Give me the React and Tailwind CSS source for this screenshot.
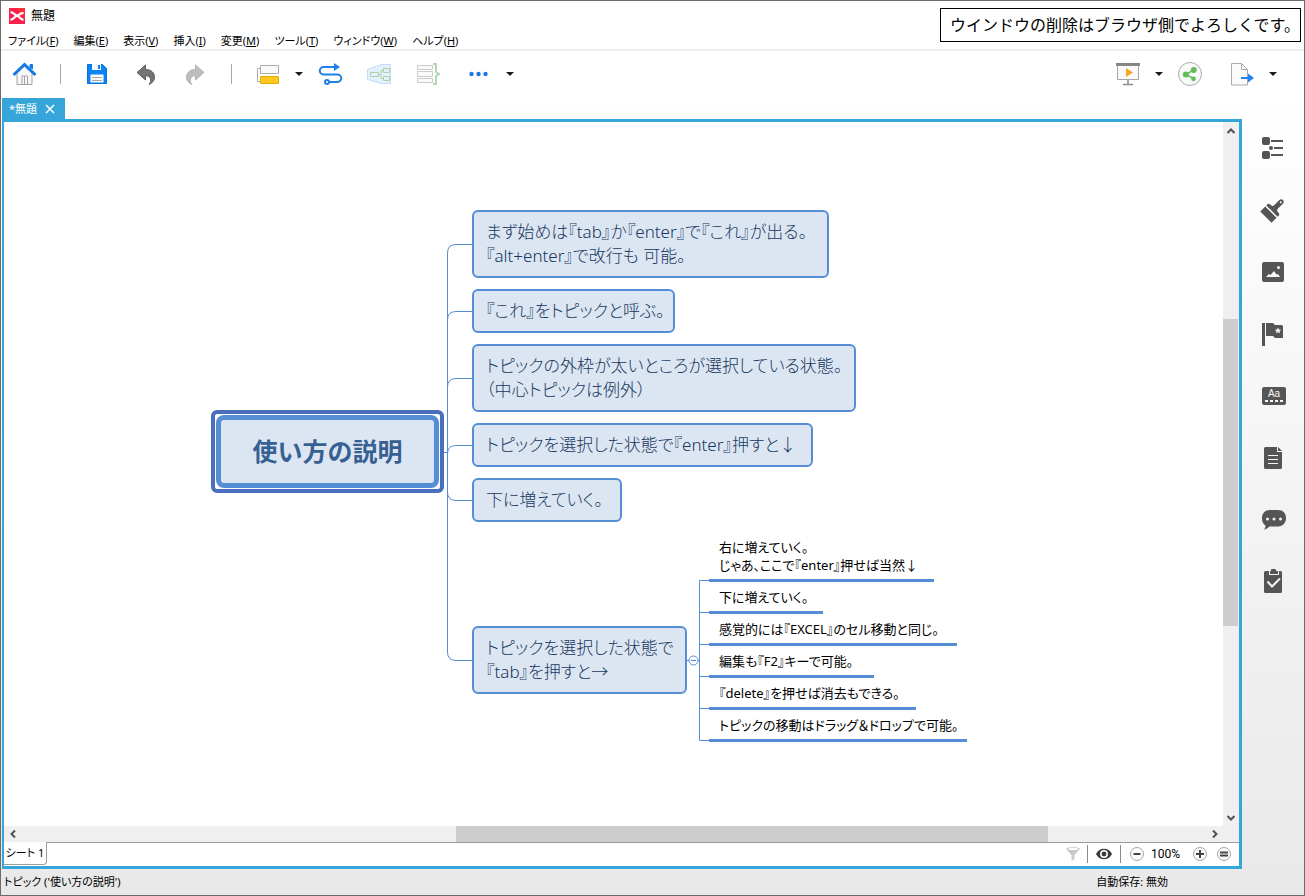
import React from "react";

const TEXT = "font-['Noto_Sans','Noto_Sans_CJK_JP',sans-serif]";

const menus = [
  ["ファイル", "F"],
  ["編集", "E"],
  ["表示", "V"],
  ["挿入", "I"],
  ["変更", "M"],
  ["ツール", "T"],
  ["ウィンドウ", "W"],
  ["ヘルプ", "H"],
];

const topics = [
  { pos: "left-[468px] top-[88px] w-[357px]", lines: ["まず始めは『tab』か『enter』で『これ』が出る。", "『alt+enter』で改行も 可能。"] },
  { pos: "left-[468px] top-[167px] w-[203px]", lines: ["『これ』をトピックと呼ぶ。"] },
  { pos: "left-[468px] top-[222px] w-[384px]", lines: ["トピックの外枠が太いところが選択している状態。", "（中心トピックは例外）"] },
  { pos: "left-[468px] top-[301px] w-[341px]", lines: ["トピックを選択した状態で『enter』押すと↓"] },
  { pos: "left-[468px] top-[356px] w-[150px]", lines: ["下に増えていく。"] },
  { pos: "left-[468px] top-[504px] w-[215px]", lines: ["トピックを選択した状態で", "『tab』を押すと→"] },
];

const subtopics = [
  { w: "w-[225px]", lines: ["右に増えていく。", "じゃあ、ここで『enter』押せば当然↓"] },
  { w: "w-[114px]", lines: ["下に増えていく。"] },
  { w: "w-[248px]", lines: ["感覚的には『EXCEL』のセル移動と同じ。"] },
  { w: "w-[165px]", lines: ["編集も『F2』キーで可能。"] },
  { w: "w-[207px]", lines: ["『delete』を押せば消去もできる。"] },
  { w: "w-[258px]", lines: ["トピックの移動はドラッグ＆ドロップで可能。"] },
];

function Svg({ w = 26, h = 26, children }) {
  return (
    <svg width={w} height={h} viewBox={`0 0 ${w} ${h}`} fill="none" aria-hidden="true" className="block shrink-0">
      {children}
    </svg>
  );
}

function IconButton({ label, children }) {
  return (
    <button type="button" aria-label={label} className="block shrink-0">
      {children}
    </button>
  );
}

function Caret({ label }) {
  return (
    <IconButton label={label}>
      <Svg w={10} h={10}>
        <path d="M1 3h8L5 7z" fill="#1c1c1c" />
      </Svg>
    </IconButton>
  );
}

function Separator() {
  return <div className="h-5 w-px shrink-0 bg-[#a6a6a6]" />;
}

const HomeIcon = () => (
  <Svg>
    <path d="M6 12v11.5h15V12l-7.500-7z" fill="#f7f7f7" stroke="#a3a3a3" />
    <path d="M11 23.500v-8.500h5.500v8.500M13.500 15v8" stroke="#a3a3a3" />
    <path d="M19 3.500h2.500V8L19 6z" fill="#1479e8" stroke="#1479e8" />
    <path d="M2.500 14L13.500 3.500L24.500 14" stroke="#1479e8" strokeWidth="3" />
  </Svg>
);

const SaveIcon = () => (
  <Svg>
    <path d="M4 3.500h14.500l4 4V22.500H3.500V3.500z" fill="#0a84f5" stroke="#0873dc" />
    <path d="M8 3h9v6H8z" fill="#f5f9ff" />
    <path d="M14 4h2v4h-2z" fill="#0a84f5" />
    <path d="M6.500 13.500h13v8h-13z" fill="#fafafa" />
    <path d="M8 16.500h10M8 19.500h10" stroke="#a8a8a8" />
  </Svg>
);

const ArrowIcon = ({ dark }) => (
  <Svg>
    <g transform={dark ? undefined : "translate(26 0) scale(-1 1)"}>
      <path d="M4 11.500L12.500 4v4.500c6 0 9 3.500 9 8 0 3.500-2.500 5.500-5.500 7 1.800-2 2.200-4 1.300-6-.8-2-2.300-2.700-4.800-2.800V19z" fill={dark ? "#747474" : "#bdbdbd"} stroke={dark ? "#5e5e5e" : "#b3b3b3"} />
    </g>
  </Svg>
);

const TopicIcon = () => (
  <Svg>
    <path d="M5 7.500H2.500v13H5" stroke="#aaa" />
    <path d="M5.500 4.500h18v8h-18z" fill="#fafafa" stroke="#aaa" />
    <path d="M5.500 15.500h18v7h-18z" fill="#ffc91a" stroke="#e6a80d" />
  </Svg>
);

const RelationIcon = () => (
  <Svg>
    <path d="M18 6H6.500a3.500 3.500 0 000 7.500h14a3.500 3.500 0 010 7.500H12" stroke="#1f80ea" strokeWidth="2" />
    <path d="M17 2l6 4-6 4z" fill="#1f80ea" />
    <circle cx="10" cy="21" r="2" fill="#fff" stroke="#1f80ea" strokeWidth="2" />
  </Svg>
);

const BoundaryIcon = () => (
  <Svg>
    <path d="M1.500 8.500l14-5h9v19h-9l-14-4z" fill="#e4f1fc" stroke="#8fc0ef" strokeDasharray="1 1" />
    <path d="M4.500 11.500h8v4h-8zM17.500 7.500h6v4h-6zM17.500 15.500h6v4h-6zM12.500 13.500h2M17 9.500h-2v8h2" stroke="#a9d3a5" />
  </Svg>
);

const SummaryIcon = () => (
  <Svg>
    <path d="M1.500 4.500h15v4h-15zM1.500 10.500h15v5h-15zM1.500 17.500h15v4h-15z" fill="#fafafa" stroke="#cbcbcb" />
    <path d="M17 3h3v8l3 2-3 2v8h-3" stroke="#b0d9ac" strokeWidth="2" />
  </Svg>
);

const DotsIcon = () => (
  <Svg>
    <circle cx="5.500" cy="13" r="2.200" fill="#1b76e8" />
    <circle cx="12.500" cy="13" r="2.200" fill="#1b76e8" />
    <circle cx="19.500" cy="13" r="2.200" fill="#1b76e8" />
  </Svg>
);

const PresentIcon = () => (
  <Svg>
    <path d="M2.500 4.500h21v14h-21z" fill="#fafafa" stroke="#a6a6a6" />
    <path d="M1 2h24v3H1z" fill="#858585" />
    <path d="M11 7l7 4.500-7 4.500z" fill="#f9a622" />
    <path d="M13 19v4M8 23.500h10" stroke="#8a8a8a" strokeWidth="1.500" />
  </Svg>
);

const ShareIcon = () => (
  <Svg>
    <circle cx="13" cy="13" r="11.500" fill="#fafafa" stroke="#a9a9a9" />
    <path d="M16.500 9L9 13.500l7.500 4" stroke="#62bd57" strokeWidth="1.500" />
    <circle cx="16.800" cy="9" r="3" fill="#62bd57" />
    <circle cx="8.800" cy="13.500" r="3" fill="#62bd57" />
    <circle cx="16.500" cy="17.800" r="2.400" fill="#62bd57" />
  </Svg>
);

const ExportIcon = () => (
  <Svg>
    <path d="M2.500 2.500h10l6 6v15.500h-16z" fill="#fafafa" stroke="#a9a9a9" />
    <path d="M12.500 2.500v6h6" stroke="#a9a9a9" />
    <path d="M12 17h7" stroke="#1f84ee" strokeWidth="2" />
    <path d="M19 12.500l6 4.500-6 4.500z" fill="#1f84ee" />
  </Svg>
);

const panelIcons = [
  [
    "アウトライン",
    <>
      <rect x="2" y="2" width="8" height="8" rx="2" />
      <rect x="2" y="16" width="8" height="8" rx="2" />
      <circle cx="11" cy="13" r="2" />
      <path d="M11 5h12v2H11zM14 12h9v2h-9zM11 19h12v2H11z" />
    </>,
  ],
  [
    "書式",
    <>
      <g transform="rotate(45 13 13)">
        <path d="M5 16h16v7H5zM5 14.500V13c0-1.500 1-2 2.500-2 2 0 3-.5 3-2.500V1.500a2.500 2.500 0 015 0v7c0 2 1 2.500 3 2.500 1.500 0 2.500.5 2.500 2v1.500z" />
        <circle cx="13" cy="2" r="1" fill="#f8f8f8" />
      </g>
    </>,
  ],
  [
    "画像",
    <>
      <rect x="2" y="3" width="22" height="20" rx="2" />
      <path d="M6 18l3-3 1.500 1 3.500-4 2.500 3.500 1.500-.5L20 18z" fill="#f8f8f8" />
      <circle cx="18.500" cy="8.500" r="1.500" fill="#f8f8f8" />
    </>,
  ],
  [
    "マーカー",
    <>
      <path d="M2 2h3v23H2zM6 2h7l2 2h6.500a1.500 1.500 0 011.500 1.500V17h-8l-2-2H6z" />
      <path d="M18 6.500l1 2 2.200.2-1.700 1.500.5 2.100-2-1.100-2 1.100.5-2.100-1.700-1.500 2.200-.2z" fill="#f8f8f8" />
    </>,
  ],
  [
    "ラベル",
    <>
      <rect x="2" y="4" width="24" height="18" rx="2" />
      <path d="M5 17h3v2H5zM10 17h3v2h-3zM15 17h3v2h-3zM20 17h3v2h-3z" fill="#f8f8f8" />
      <text x="14" y="14" textAnchor="middle" className="font-['Liberation_Sans',sans-serif] text-[10px]" fill="#f8f8f8">Aa</text>
    </>,
  ],
  [
    "ノート",
    <>
      <path d="M5.500 2H17v5h5v15.500a1.500 1.500 0 01-1.500 1.500h-15A1.500 1.500 0 014 22.500v-19A1.500 1.500 0 015.500 2zM18 2l4 4h-4z" />
      <path d="M8 10.500h10M8 14.500h10M8 18.500h10" stroke="#f8f8f8" />
    </>,
  ],
  [
    "コメント",
    <>
      <path d="M10 3h8c5 0 8 3.500 8 8s-3 8.500-8 8.500H9.500C8 21 6 22.500 4 22.500c1-1 1.500-2.500 1.500-4C3 17 2 14.500 2 11c0-4.500 3-8 8-8z" />
      <circle cx="7.500" cy="12" r="1.500" fill="#f4f4f4" />
      <circle cx="14" cy="12" r="1.500" fill="#f4f4f4" />
      <circle cx="20.500" cy="12" r="1.500" fill="#f4f4f4" />
    </>,
  ],
  [
    "タスク",
    <>
      <path d="M5.500 2H9v4h10V2h1.500A1.500 1.500 0 0122 3.500v19a1.500 1.500 0 01-1.500 1.500h-15A1.500 1.500 0 014 22.500v-19A1.500 1.500 0 015.500 2zM10 2h1V1q0-1 1-1h3q1 0 1 1v1h2v3h-8z" />
      <path d="M7.500 12.500l4.500 5 8-8" stroke="#f4f4f4" strokeWidth="2" />
    </>,
  ],
];

function Chevron({ d, label, box }) {
  return (
    <button type="button" aria-label={label} className={`flex shrink-0 items-center justify-center ${box}`}>
      <Svg w={10} h={10}>
        <path d={d} stroke="#505050" strokeWidth="2" />
      </Svg>
    </button>
  );
}

function ZoomButton({ label, d }) {
  return (
    <IconButton label={label}>
      <Svg w={16} h={16}>
        <circle cx="8" cy="8" r="6.500" fill="#fafafa" stroke="#a6a6a6" />
        <path d={d} stroke="#444" strokeWidth="2" />
      </Svg>
    </IconButton>
  );
}

function Lines({ lines }) {
  return lines.map((line) => (
    <div key={line} className="whitespace-nowrap">
      {line}
    </div>
  ));
}

function MindMap() {
  return (
    <div className="relative min-w-0 flex-1 overflow-hidden bg-white [font-feature-settings:'palt']">
      <svg width="1219" height="704" viewBox="4 122 1219 704" fill="none" stroke="#558ed5" className="absolute left-0 top-0" aria-hidden="true">
        <path d="M472 244.500H456Q447.500 244.500 447.500 253V652Q447.500 660.500 456 660.500H472" />
        <path d="M472 311.500H456Q447.500 311.500 447.500 320M472 378.500H456Q447.500 378.500 447.500 387M472 445.500H456Q447.500 445.500 447.500 454M472 500.500H456Q447.500 500.500 447.500 492M440 452.500h7" />
        <path d="M687 660.500h2M698 660.500h2M709 580.500H699.500V740.500H709M699 612.500h10M699 644.500h10M699 676.500h10M699 708.500h10" />
        <circle cx="693.500" cy="660.500" r="4.500" fill="#fff" />
        <path d="M691 660.500h5" />
      </svg>
      <div className="absolute left-[207px] top-[288px] rounded-md border-4 border-[#4a6fbd] p-px">
        <h1 className="w-[223px] rounded-lg border-[5px] border-[#558ed5] bg-[#dce6f2] pb-[14px] pt-[13px] text-center text-[25px]/[36px] font-bold text-[#376092] [font-feature-settings:normal]">
          使い方の説明
        </h1>
      </div>
      {topics.map((t) => (
        <div key={t.lines[0]} className={`absolute rounded-md border-2 border-[#558ed5] bg-[#dce6f2] py-2 pl-3 text-[17px]/[24px] font-light text-[#17375e] ${t.pos}`}>
          <Lines lines={t.lines} />
        </div>
      ))}
      <div className="absolute left-[705px] top-[410px]">
        {subtopics.map((t) => (
          <div key={t.lines[0]} className={`border-b-[3px] border-[#558ed5] pb-[5px] pl-[10px] pt-[6px] text-[13px]/[18px] text-black ${t.w}`}>
            <Lines lines={t.lines} />
          </div>
        ))}
      </div>
    </div>
  );
}

export default function App() {
  return (
    <div className={`relative flex min-h-screen flex-col border border-[#6b6b6b] bg-linear-to-b from-white from-10% to-[#e9e9e9] text-[11px]/[18px] text-black ${TEXT}`}>
      <header className="border-b-2 border-[#eeeeee] bg-white">
        <div className="flex h-[30px] items-center gap-[6px] pl-2">
          <Svg w={16} h={16}>
            <path d="M0 0h16v16H0z" fill="#fb1f4b" />
            <path d="M8 0h8v12z" fill="#ff3d2e" opacity=".5" />
            <path d="M1.500 4.500C5 4 5.500 7.500 8 7.500s4-3.500 6.500-2M1.500 11.500C5 12 5.500 8 8 8s3 4 6.500 3.500" stroke="#fff" strokeWidth="2.200" />
          </Svg>
          <span className="text-[12px]">無題</span>
        </div>
        <nav className="flex h-[18px] items-center gap-[15px] pl-[7px] pt-px [font-feature-settings:'palt']">
          {menus.map(([name, key]) => (
            <button type="button" key={key} className="whitespace-nowrap">
              {name}(<span className="underline">{key}</span>)
            </button>
          ))}
        </nav>
      </header>
      <div className="absolute right-[3px] top-[7px] whitespace-nowrap border border-black bg-white pl-[9px] text-[16px]/[32px]">
        ウインドウの削除はブラウザ側でよろしくです。
      </div>

      <div className="flex h-[47px] items-center pb-px pl-[10px] pr-[26px]">
        <div className="flex items-center gap-[23px]">
          <IconButton label="ホーム"><HomeIcon /></IconButton>
          <Separator />
          <IconButton label="保存"><SaveIcon /></IconButton>
          <IconButton label="元に戻す"><ArrowIcon dark /></IconButton>
          <IconButton label="やり直し"><ArrowIcon /></IconButton>
          <Separator />
        </div>
        <div className="ml-[23px] flex items-center gap-[13px]">
          <IconButton label="トピック"><TopicIcon /></IconButton>
          <Caret label="トピックのメニュー" />
          <IconButton label="関連"><RelationIcon /></IconButton>
        </div>
        <div className="ml-[23px] flex items-center gap-6">
          <IconButton label="囲み"><BoundaryIcon /></IconButton>
          <IconButton label="要約"><SummaryIcon /></IconButton>
          <div className="flex items-center gap-[13px]">
            <IconButton label="その他"><DotsIcon /></IconButton>
            <Caret label="その他のメニュー" />
          </div>
        </div>
        <div className="ml-auto flex items-center gap-[13px]">
          <IconButton label="プレゼンテーション"><PresentIcon /></IconButton>
          <Caret label="プレゼンテーションのメニュー" />
          <IconButton label="共有"><ShareIcon /></IconButton>
          <div className="w-0" />
          <IconButton label="エクスポート"><ExportIcon /></IconButton>
          <Caret label="エクスポートのメニュー" />
        </div>
      </div>

      <div className="flex flex-1">
        <div className="ml-px flex min-w-0 flex-1 flex-col">
          <div className="flex h-[21px] w-[63px] items-center gap-2 bg-[#36a6da] pl-[7px] text-white">
            <span className="whitespace-nowrap">*無題</span>
            <IconButton label="閉じる">
              <Svg w={10} h={10}>
                <path d="M1 1l8 8M9 1l-8 8" stroke="#fff" strokeWidth="1.500" />
              </Svg>
            </IconButton>
          </div>
          <div className="flex flex-1 flex-col border-2 border-y-[3px] border-r-[3px] border-[#36a6da] bg-[#efefef]">
            <div className="flex min-h-[704px] flex-1">
              <MindMap />
              <div className="mr-px flex w-[15px] flex-col">
                <Chevron label="上へスクロール" d="M1.500 7L5 3.500L8.500 7" box="h-[17px]" />
                <div className="flex-[180]" />
                <div className="flex-[307] bg-[#cdcdcd]" />
                <div className="flex-[183]" />
                <Chevron label="下へスクロール" d="M1.500 3L5 6.500L8.500 3" box="h-[17px]" />
              </div>
            </div>
            <div className="flex h-4 pr-4">
              <Chevron label="左へスクロール" d="M7 1.500L3.500 5L7 8.500" box="w-[17px]" />
              <div className="flex-[435]" />
              <div className="flex-[592] bg-[#cdcdcd]" />
              <div className="flex-[158]" />
              <Chevron label="右へスクロール" d="M3 1.500L6.500 5L3 8.500" box="w-[17px]" />
            </div>
            <div className="flex h-6 bg-white">
              <button type="button" className="mb-px w-[43px] whitespace-nowrap rounded-br border-b border-r border-[#9c9c9c] text-center [font-feature-settings:'palt']">
                シート 1
              </button>
              <div className="flex flex-1 items-center justify-end border-t border-[#9c9c9c] pb-px pr-[7px]">
                <IconButton label="フィルター">
                  <Svg w={16} h={16}>
                    <path d="M1 3c0-2.500 14-2.500 14 0L9.500 9v4.500L6.500 15V9z" fill="#c9c9c9" />
                    <ellipse cx="8" cy="3" rx="5" ry="1" fill="#fff" />
                  </Svg>
                </IconButton>
                <div className="ml-[6px] h-[18px] w-px bg-[#8c8c8c]" />
                <div className="px-2">
                  <IconButton label="表示">
                    <Svg w={16} h={16}>
                      <path d="M0 8c3-7 13-7 16 0-3 7-13 7-16 0z" fill="#3c3c3c" />
                      <circle cx="8" cy="8" r="3.200" stroke="#fff" strokeWidth="1.500" />
                    </Svg>
                  </IconButton>
                </div>
                <div className="mr-2 h-[18px] w-px bg-[#8c8c8c]" />
                <ZoomButton label="縮小" d="M4.500 8h7" />
                <span className="w-[47px] pl-[6px] font-['Roboto',sans-serif] text-[12px]">100%</span>
                <ZoomButton label="拡大" d="M4 8h8M8 4v8" />
                <div className="w-2" />
                <ZoomButton label="ウィンドウに合わせる" d="M4 6.500h8M4 9.500h8" />
              </div>
            </div>
          </div>
        </div>
        <aside className="flex w-[62px] flex-col items-center gap-9 pt-[37px]">
          {panelIcons.map(([label, shape]) => (
            <IconButton key={label} label={label}>
              <svg width="26" height="26" viewBox="0 0 26 26" fill="#555" aria-hidden="true" className="block overflow-visible">
                {React.Children.map(shape.props.children, (child) =>
                  child.props.stroke ? React.cloneElement(child, { fill: "none" }) : child
                )}
              </svg>
            </IconButton>
          ))}
        </aside>
      </div>

      <footer className="flex h-[26px] items-center justify-between pb-px pl-[3px] pr-[136px]">
        <span className="[font-feature-settings:'palt']">トピック ('使い方の説明')</span>
        <span>自動保存: 無効</span>
      </footer>
    </div>
  );
}
